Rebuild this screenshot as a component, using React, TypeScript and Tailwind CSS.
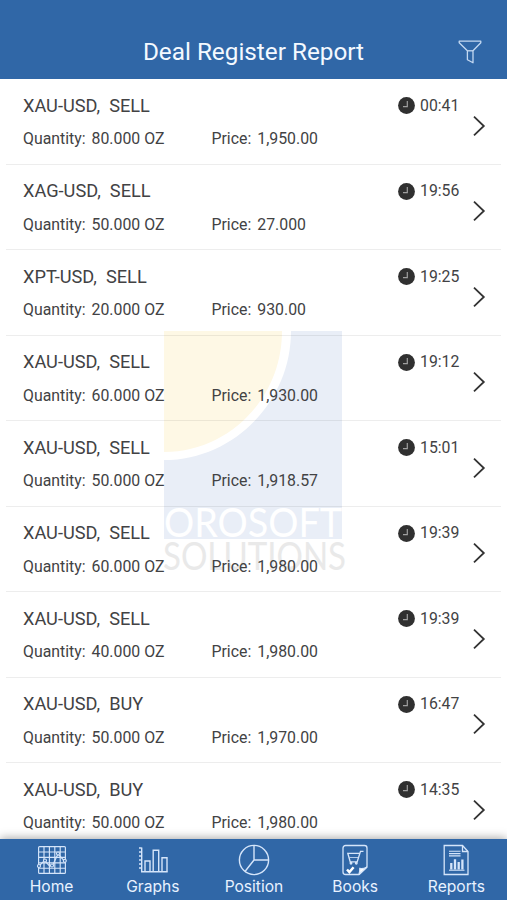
import React from 'react';

type Deal = { pair: string; side: string; qty: string; price: string; time: string };

const deals: Deal[] = [
  { pair: 'XAU-USD', side: 'SELL', qty: '80.000', price: '1,950.00', time: '00:41' },
  { pair: 'XAG-USD', side: 'SELL', qty: '50.000', price: '27.000', time: '19:56' },
  { pair: 'XPT-USD', side: 'SELL', qty: '20.000', price: '930.00', time: '19:25' },
  { pair: 'XAU-USD', side: 'SELL', qty: '60.000', price: '1,930.00', time: '19:12' },
  { pair: 'XAU-USD', side: 'SELL', qty: '50.000', price: '1,918.57', time: '15:01' },
  { pair: 'XAU-USD', side: 'SELL', qty: '60.000', price: '1,980.00', time: '19:39' },
  { pair: 'XAU-USD', side: 'SELL', qty: '40.000', price: '1,980.00', time: '19:39' },
  { pair: 'XAU-USD', side: 'BUY', qty: '50.000', price: '1,970.00', time: '16:47' },
  { pair: 'XAU-USD', side: 'BUY', qty: '50.000', price: '1,980.00', time: '14:35' },
];

function FilterIcon() {
  return (
    <svg width="24" height="24" viewBox="0 0 24 24" fill="none" stroke="#c4d9f2" strokeWidth="1.3" strokeLinejoin="round">
      <path d="M1.2 1.2h21.6v1.6L15 10.8v12L9.4 19.8v-9L1.2 2.8z" />
      <path d="M9.4 10.8H15" />
    </svg>
  );
}

function ClockIcon() {
  return (
    <svg className="shrink-0" width="17" height="17" viewBox="0 0 17 17" fill="none">
      <circle cx="8.5" cy="8.5" r="8.4" fill="#303030" />
      <path d="M9.3 4v5.6H5" stroke="#a0a0a0" strokeWidth="1.2" />
    </svg>
  );
}

function DealRow({ deal }: { deal: Deal }) {
  return (
    <div className="relative mx-1.5 flex h-[85.5px] shrink-0 border-b border-black/[0.07] pl-[17px] pr-[15px] text-[#424244]">
      <div className="flex-1">
        <div className="mt-[14.5px] h-6 text-[18.2px] leading-6 whitespace-pre">{deal.pair},{'  '}{deal.side}</div>
        <div className="mt-[9.5px] flex text-[15.85px] leading-6">
          <span className="w-[188.5px]">Quantity:<span className="ml-[6px]">{deal.qty} OZ</span></span>
          <span>Price:<span className="ml-[6px]">{deal.price}</span></span>
        </div>
      </div>
      <div className="mt-[14.5px] flex h-6 w-[70.5px] items-center gap-[5.5px]">
        <ClockIcon />
        <span className="text-[15.8px] leading-6">{deal.time}</span>
      </div>
      <svg className="mt-[35.5px]" width="18" height="22" viewBox="0 0 18 22" fill="none" stroke="#333" strokeWidth="1.8">
        <path d="M6 1.7L15.8 11L6 20.3" />
      </svg>
    </div>
  );
}

function Watermark() {
  return (
    <svg className="pointer-events-none absolute top-[252px] left-[160px]" width="190" height="245" viewBox="160 331 190 245">
      <rect x="164" y="331" width="178" height="208" fill="#e9eef7" />
      <path d="M164 331H291C291 402 233 460 164 460z" fill="#fff" />
      <path d="M164 331H282C282 398 229 452 164 452z" fill="#fef8e5" />
      <text x="164" y="537" textLength="178" lengthAdjust="spacingAndGlyphs" fill="#fff" fontSize="40.5" className="font-['Lato']">OROSOFT</text>
      <text x="163" y="569.5" textLength="183" lengthAdjust="spacingAndGlyphs" fill="#e9e9e9" fontSize="39" className="font-['Lato']">SOLUTIONS</text>
    </svg>
  );
}

function HomeIcon() {
  return (
    <svg width="32" height="32" viewBox="0 0 32 32" fill="none" stroke="#d5e5fa" strokeWidth="1.15">
      <rect x="2.6" y="2.6" width="26.8" height="26.8" rx="1" />
      <path d="M8 3v26M13.4 3v26M18.8 3v26M24.2 3v26M3 8h26M3 13.4h26M3 18.8h26M3 24.2h26" />
      <path d="M3 22l5.5-5.5 5 5.5 3-.5 5.5-11.5 6.5 7" />
      <g fill="#3067a7"><circle cx="3" cy="22" r="1.5" /><circle cx="9" cy="16.5" r="1.5" /><circle cx="16" cy="21.5" r="1.5" /><circle cx="22" cy="9.5" r="1.5" /><circle cx="28.8" cy="16.8" r="1.5" /></g>
    </svg>
  );
}

function GraphsIcon() {
  return (
    <svg width="32" height="32" viewBox="0 0 32 32" fill="none" stroke="#d5e5fa" strokeWidth="1.4">
      <path d="M4.7 3.5v24.3h26M2 4h2.7M2 8h2.7M2 12h2.7M2 16h2.7M2 20h2.7M2 24h2.7" />
      <path d="M8 27.5V17h5v10.5M16.2 27.5V6.3h5.5v21.2M25 27.5V13.8h5v13.7" />
    </svg>
  );
}

function PositionIcon() {
  return (
    <svg width="32" height="32" viewBox="0 0 32 32" fill="none" stroke="#d5e5fa" strokeWidth="1.4">
      <circle cx="16" cy="16" r="14.6" />
      <path d="M16 1.4V16h14.6M16 16L7 27.5" />
    </svg>
  );
}

function BooksIcon() {
  return (
    <svg width="32" height="32" viewBox="0 0 32 32" fill="none" stroke="#d5e5fa" strokeWidth="1.3">
      <path d="M20 30.5H6.5a2.5 2.5 0 0 1-2.5-2.5V4a2.5 2.5 0 0 1 2.5-2.5h19A2.5 2.5 0 0 1 28 4v19z" />
      <path d="M20 30.5q1-3 .8-6 3.5.5 7.2-1.5z" fill="#fff" />
      <path d="M24.5 7.3h-3l-3.3 10.5H11.2L8.8 9.3h12" />
      <path d="M10.5 13.5h9" strokeWidth="0.8" />
      <circle cx="12" cy="19.3" r="0.8" /><circle cx="17.3" cy="19.3" r="0.8" />
      <path d="M8 25.5l2.4 2.6 4.2-4.8" stroke="#fff" strokeWidth="2.5" />
    </svg>
  );
}

function ReportsIcon() {
  return (
    <svg width="32" height="32" viewBox="0 0 32 32" fill="none" stroke="#d5e5fa" strokeWidth="1.3">
      <path d="M4.2 1.5H22.5l5.5 6v23H4.2z" />
      <path d="M22.5 1.5v6h5.5" />
      <path d="M9 7.3h11.5M9 9.6h11.5M9 11.9h11.5" strokeWidth="1.1" />
      <path d="M9 26.2h15.5" strokeWidth="1.1" />
      <path d="M11.3 25.5v-6.5M15 25.5V15.2M18.7 25.5v-7.5M22.4 25.5V15.5" strokeWidth="2.3" />
    </svg>
  );
}

const tabs = [
  { label: 'Home', icon: <HomeIcon /> },
  { label: 'Graphs', icon: <GraphsIcon /> },
  { label: 'Position', icon: <PositionIcon /> },
  { label: 'Books', icon: <BooksIcon /> },
  { label: 'Reports', icon: <ReportsIcon /> },
];

export default function App() {
  return (
    <div className="flex h-[900px] w-[507px] flex-col overflow-hidden bg-white font-['Roboto',sans-serif]">
      <header className="grid h-[79px] shrink-0 grid-cols-[1fr_auto_1fr] items-center bg-[#3067a7] pt-[24px]">
        <h1 className="col-start-2 text-[24.3px] leading-8 text-[#f4f9ff]">Deal Register Report</h1>
        <div className="flex justify-end pr-[25px]"><FilterIcon /></div>
      </header>
      <main className="relative flex h-[760px] shrink-0 flex-col overflow-hidden">
        <Watermark />
        {deals.map((deal, i) => <DealRow key={i} deal={deal} />)}
      </main>
      <nav className="relative grid flex-1 grid-cols-5 bg-[#3067a7] pl-px shadow-[0_-1px_9px_rgba(0,0,0,0.35)]">
        {tabs.map((tab) => (
          <div key={tab.label} className="flex flex-col items-center pt-[5px]">
            {tab.icon}
            <span className="mt-px text-[15.6px] leading-5 text-[#e8f2ff] font-['Inter']">{tab.label}</span>
          </div>
        ))}
      </nav>
    </div>
  );
}
